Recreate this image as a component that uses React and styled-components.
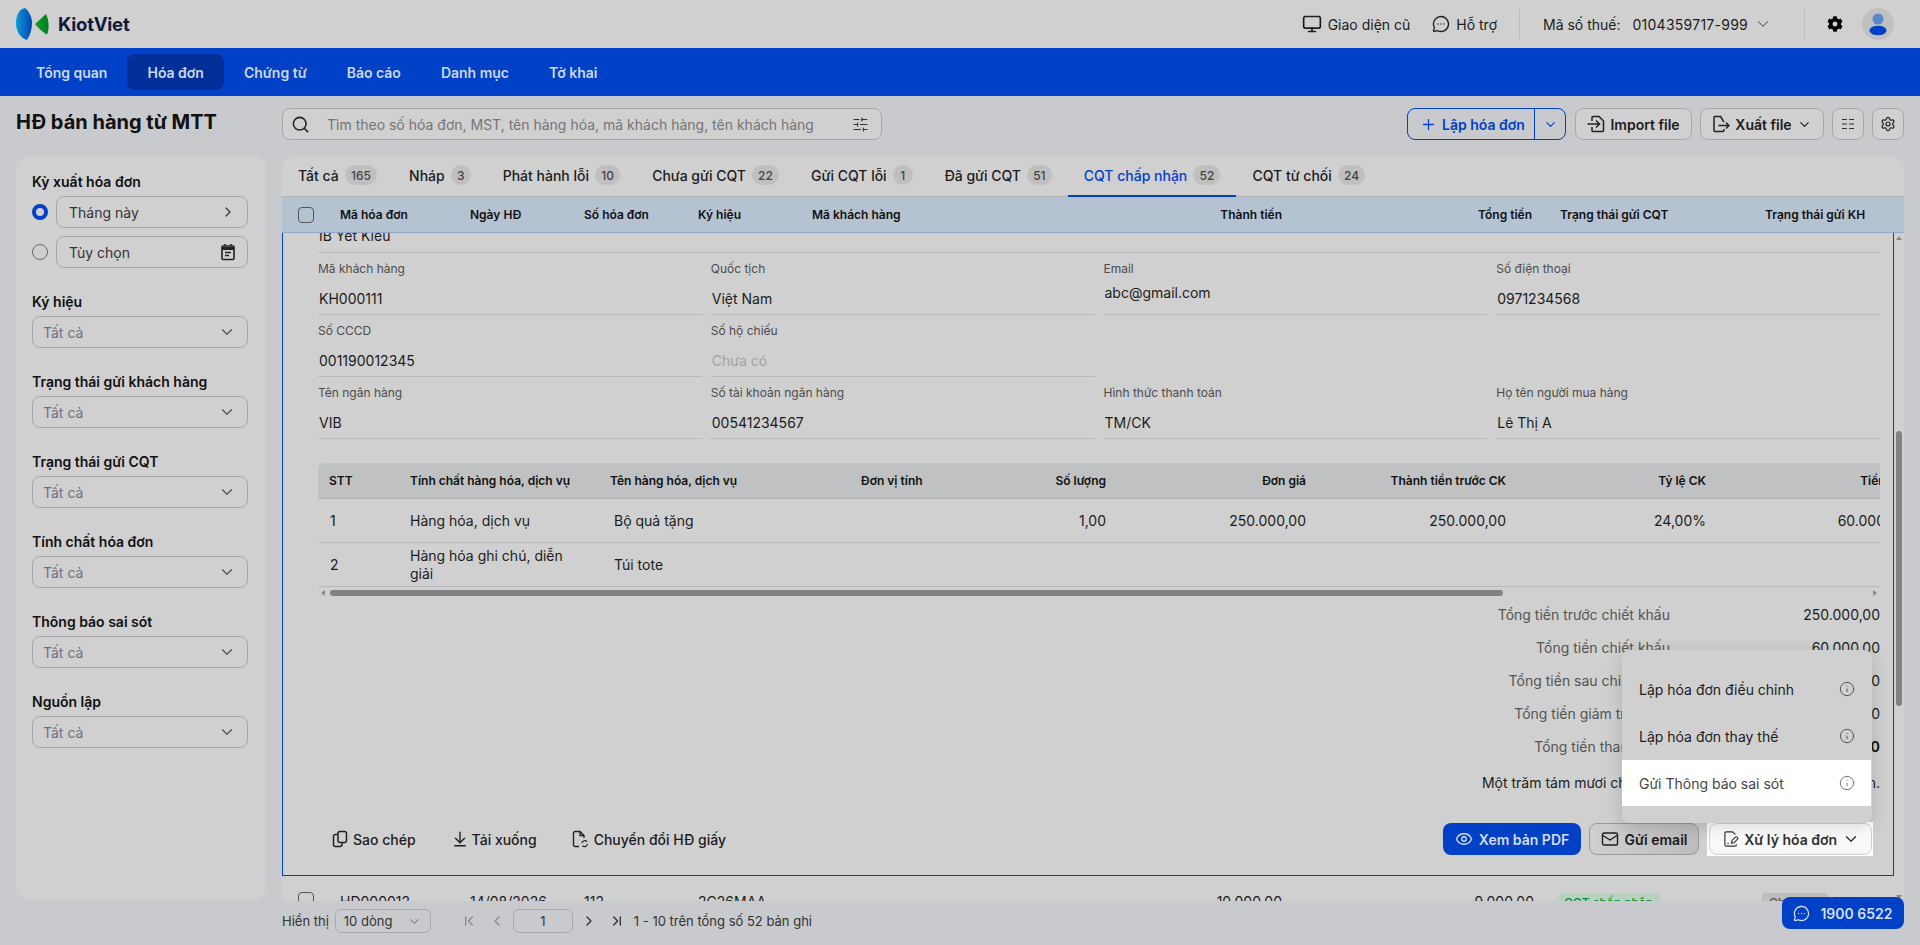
import React from 'react';
import styled, { createGlobalStyle } from 'styled-components';
import {
  ArrowDownToLine,
  ChevronDown,
  ChevronLeft,
  ChevronRight,
  ChevronFirst,
  ChevronLast,
  Eye,
  FilePenLine,
  Info,
  Mail,
  MessageCircleMore,
  Monitor,
  Plus,
  Search,
  Settings,
  SlidersHorizontal,
} from 'lucide-react';
import { FaCog } from 'react-icons/fa';

const BLUE = '#0041c7';
const PANEL = '#d0d0d0';
const LINE = '#b9b9b9';
const INK = '#1c1c1c';

const GlobalStyle = createGlobalStyle`
  * { box-sizing: border-box; }
  html, body { margin: 0; padding: 0; height: 100%; }
  body {
    font-family: Inter, "Noto Sans", "Liberation Sans", sans-serif;
    font-size: 14px;
    color: ${INK};
    background: #c8cacd;
  }
`;

const Page = styled.div`
  height: 100vh;
  display: flex;
  flex-direction: column;
  overflow: hidden;
  background: #c8cacd;
`;

const TopBar = styled.header`
  height: 48px;
  flex: none;
  display: flex;
  align-items: center;
  justify-content: space-between;
  padding: 0 26px 0 16px;
  background: ${PANEL};
`;

const Brand = styled.div`
  display: flex;
  align-items: center;
  gap: 9px;
  font-size: 18.5px;
  font-weight: 700;
  color: #0f1b3d;
  letter-spacing: -0.2px;
`;

const TopRight = styled.div`
  display: flex;
  align-items: center;
  height: 100%;
`;

const TopLink = styled.div`
  display: flex;
  align-items: center;
  gap: 6px;
  margin-right: ${(p) => p.$gap || 0}px;
`;

const Divider = styled.span`
  width: 1px;
  height: 30px;
  background: #bcbcbc;
  margin: 0 ${(p) => p.$right}px 0 ${(p) => p.$left}px;
`;

const TaxNumber = styled.span`
  margin-left: 12px;
  margin-right: 6px;
  letter-spacing: 0.25px;
`;

const Avatar = styled.div`
  width: 32px;
  height: 32px;
  border-radius: 50%;
  background: #c0c0c0;
  margin-left: 19px;
  display: flex;
  align-items: center;
  justify-content: center;
`;

const NavBar = styled.nav`
  height: 48px;
  flex: none;
  display: flex;
  align-items: center;
  padding: 0 16px;
  background: ${BLUE};
`;

const NavItem = styled.div`
  height: 36px;
  display: flex;
  align-items: center;
  padding: 0 20px;
  border-radius: 8px;
  font-weight: 600;
  color: #ccd6ec;
  background: ${(p) => (p.$active ? '#002f99' : 'transparent')};
`;

const Content = styled.main`
  flex: 1;
  min-height: 0;
  display: grid;
  grid-template-columns: 250px 1622px;
  grid-template-rows: 60px 1fr;
  column-gap: 16px;
  padding: 0 16px;
`;

const Title = styled.h1`
  margin: 0;
  font-size: 20px;
  font-weight: 700;
  color: #111;
  line-height: 52px;
`;

const ToolRow = styled.div`
  display: flex;
  align-items: flex-start;
  justify-content: space-between;
  padding-top: 12px;
`;

const SearchBox = styled.div`
  width: 600px;
  height: 32px;
  display: flex;
  align-items: center;
  padding: 0 12px 0 8px;
  border: 1px solid #a9a9a9;
  border-radius: 8px;
  background: ${PANEL};
`;

const Placeholder = styled.span`
  flex: 1;
  margin-left: 17px;
  color: #757575;
`;

const ToolGroup = styled.div`
  display: flex;
  gap: 8px;
`;

const OutlineButton = styled.button`
  height: 32px;
  display: flex;
  align-items: center;
  justify-content: center;
  gap: 5px;
  padding: 0 ${(p) => (p.$square ? 0 : 10)}px;
  width: ${(p) => (p.$w ? `${p.$w}px` : 'auto')};
  border: 1px solid #a9a9a9;
  border-radius: 8px;
  background: ${PANEL};
  color: ${INK};
  font: 600 14px Inter, sans-serif;
`;

const SplitButton = styled.div`
  width: 159px;
  height: 32px;
  display: flex;
  border: 1px solid ${BLUE};
  border-radius: 8px;
  color: ${BLUE};
  font-weight: 600;
  margin-right: 1px;
`;

const SplitMain = styled.div`
  flex: 1;
  display: flex;
  align-items: center;
  gap: 5px;
  padding-left: 12px;
  border-right: 1px solid ${BLUE};
`;

const SplitArrow = styled.div`
  width: 30px;
  display: flex;
  align-items: center;
  justify-content: center;
`;

const Sidebar = styled.aside`
  height: 744px;
  padding: 16px 18px 16px 16px;
  border-radius: 12px;
  background: ${PANEL};
  display: flex;
  flex-direction: column;
  gap: 24px;
`;

const FilterGroup = styled.section`
  display: flex;
  flex-direction: column;
  gap: 4px;
`;

const FilterLabel = styled.div`
  line-height: 20px;
  font-weight: 600;
  color: #111;
`;

const PeriodRows = styled.div`
  display: flex;
  flex-direction: column;
  gap: 8px;
`;

const PeriodRow = styled.div`
  display: flex;
  align-items: center;
  gap: 8px;
`;

const Radio = styled.span`
  width: 16px;
  height: 16px;
  flex: none;
  border-radius: 50%;
  background: ${PANEL};
  border: ${(p) => (p.$on ? `4.5px solid ${BLUE}` : '1px solid #666')};
`;

const SelectBox = styled.div`
  flex: 1 0 auto;
  height: 32px;
  display: flex;
  align-items: center;
  justify-content: space-between;
  padding: 0 11px 0 ${(p) => (p.$muted ? 10 : 12)}px;
  border: 1px solid #a9a9a9;
  border-radius: 8px;
  color: ${(p) => (p.$muted ? '#6b7280' : '#333')};
`;

const Main = styled.div`
  height: 789px;
  display: flex;
  flex-direction: column;
`;

const Card = styled.div`
  height: 745px;
  flex: none;
  display: flex;
  flex-direction: column;
  border-radius: 12px 12px 0 0;
  overflow: hidden;
  background: ${PANEL};
`;

const Tabs = styled.div`
  height: 41px;
  flex: none;
  display: flex;
  border-bottom: 1px solid #b4b4b4;
`;

const Tab = styled.div`
  height: 41px;
  display: flex;
  align-items: center;
  gap: 6px;
  padding: 0 16px 1px;
  font-weight: 500;
  color: ${(p) => (p.$active ? BLUE : INK)};
  border-bottom: 2px solid ${(p) => (p.$active ? BLUE : 'transparent')};
`;

const Badge = styled.span`
  height: 20px;
  min-width: 20px;
  padding: 0 6.2px;
  display: flex;
  align-items: center;
  justify-content: center;
  border-radius: 10px;
  background: #bfbfbf;
  font-size: 12px;
  font-weight: 500;
  color: #444;
`;

const COLUMNS = '58px 130px 114px 114px 114px 300px 180px 258px 205px 1fr';

const HeadRow = styled.div`
  height: 36px;
  flex: none;
  display: grid;
  grid-template-columns: ${COLUMNS};
  align-items: center;
  background: #b4c2d2;
  border-bottom: 1px solid #8fa8cc;
  font-size: 12px;
  font-weight: 600;
  color: #111;
`;

const Cell = styled.div`
  padding-left: ${(p) => (p.$status ? 10 : 0)}px;
  padding-right: ${(p) => p.$pr ?? 0}px;
  text-align: ${(p) => (p.$pr ? 'right' : 'left')};
  white-space: nowrap;
`;

const CheckCell = styled.div`
  padding-left: 16px;
`;

const Checkbox = styled.span`
  display: block;
  width: 16px;
  height: 16px;
  border: 1px solid #555;
  border-radius: 4px;
`;

const CardBody = styled.div`
  flex: 1;
  min-height: 0;
  display: flex;
`;

const ListColumn = styled.div`
  width: 1612px;
  flex: none;
  display: flex;
  flex-direction: column;
`;

const Detail = styled.div`
  height: 643px;
  flex: none;
  padding: 0 13px 0 35px;
  border: 1px solid ${BLUE};
  border-top: none;
  overflow: hidden;
`;

const ClippedBuyer = styled.div`
  display: flow-root;
  height: 20px;
  border-bottom: 1px solid ${LINE};
  line-height: 20px;
  padding-left: 1px;
`;

const BuyerText = styled.div`
  margin-top: -7px;
`;

const FieldGrid = styled.div`
  display: grid;
  grid-template-columns: repeat(4, 383.75px);
  grid-auto-rows: 62px;
  column-gap: 9px;
`;

const Field = styled.div`
  border-bottom: 1px solid ${LINE};
  padding-top: 8px;
`;

const FieldLabel = styled.div`
  font-size: 12px;
  line-height: 16px;
  color: #4c4c4c;
`;

const FieldValue = styled.div`
  margin-top: ${(p) => p.$top ?? 12}px;
  padding-left: 1px;
  line-height: 20px;
  color: ${(p) => (p.$empty ? '#a2a2a2' : INK)};
`;

const ItemsWrap = styled.div`
  margin-top: 24px;
  overflow: hidden;
`;

const ITEM_COLUMNS = '82px 200px 250px 150px 116px 200px 200px 200px 200px';

const ItemsHead = styled.div`
  height: 36px;
  width: 1598px;
  display: grid;
  grid-template-columns: ${ITEM_COLUMNS};
  align-items: center;
  background: #bfc1c3;
  border-bottom: 1px solid #b0b0b0;
  border-radius: 6px 6px 0 0;
  font-size: 12px;
  font-weight: 600;
  color: #111;
`;

const ItemsRow = styled.div`
  height: 43px;
  width: 1598px;
  padding-top: 1px;
  display: grid;
  grid-template-columns: ${ITEM_COLUMNS};
  align-items: center;
  line-height: 18px;
`;

const ItemRowFrame = styled.div`
  border-bottom: 1px solid ${LINE};
`;

const ItemCell = styled.div`
  padding-left: ${(p) => p.$left ?? 10}px;
  padding-right: ${(p) => p.$pr ?? 10}px;
  text-align: ${(p) => (p.$right ? 'right' : 'left')};
`;

const HScroll = styled.div`
  height: 11px;
  display: flex;
  align-items: center;
  gap: 5px;
  padding: 0 3px;
`;

const HThumb = styled.div`
  width: 1173px;
  height: 6px;
  border-radius: 3px;
  background: #808284;
`;

const ArrowLeft = styled.span`
  border: 3px solid transparent;
  border-right: 4px solid #8a8a8a;
  border-left: none;
`;

const ArrowRight = styled.span`
  margin-left: auto;
  border: 3px solid transparent;
  border-left: 4px solid #8a8a8a;
  border-right: none;
`;

const TotalRow = styled.div`
  height: 33px;
  display: grid;
  grid-template-columns: 1fr 210px;
  align-items: center;
  text-align: right;
  color: #555;
`;

const TotalValue = styled.span`
  color: ${INK};
  font-weight: ${(p) => (p.$bold ? 700 : 400)};
`;

const AmountWords = styled.div`
  height: 39px;
  line-height: 39px;
  text-align: right;
  white-space: nowrap;
  color: ${INK};
`;

const ActionBar = styled.div`
  margin-top: 20px;
  display: flex;
  justify-content: space-between;
  align-items: center;
  padding-right: 7px;
`;

const ActionGroup = styled.div`
  display: flex;
  align-items: center;
  gap: ${(p) => p.$gap}px;
`;

const GhostAction = styled.div`
  display: flex;
  align-items: center;
  gap: ${(p) => p.$gap ?? 5}px;
  padding: 0 14px;
  font-weight: 500;
  white-space: nowrap;
`;

const PrimaryAction = styled.div`
  width: 138px;
  height: 32px;
  display: flex;
  align-items: center;
  justify-content: center;
  gap: 6px;
  border-radius: 8px;
  background: ${BLUE};
  color: #d4dcee;
  font-weight: 600;
`;

const MailAction = styled.div`
  width: 110px;
  height: 32px;
  display: flex;
  align-items: center;
  justify-content: center;
  gap: 6px;
  border: 1px solid #9a9a9a;
  border-radius: 8px;
  background: linear-gradient(90deg, #cfcfcf, #bdbdbd);
  font-weight: 600;
`;

const MenuAnchor = styled.div`
  position: relative;
  padding: 1px 1px 1px 2px;
  background: #fff;
`;

const HandleButton = styled.div`
  width: 163px;
  height: 32px;
  display: flex;
  align-items: center;
  gap: 5px;
  padding: 0 11px 0 12px;
  border: 1px solid #d2d2d2;
  border-radius: 8px;
  background: linear-gradient(180deg, #fff, #f6f6f6);
  color: #333;
  font-weight: 600;
  white-space: nowrap;
`;

const HandleChevron = styled(ChevronDown)`
  margin-left: auto;
  flex: none;
`;

const Dropdown = styled.div`
  position: absolute;
  right: 1px;
  bottom: 33px;
  width: 250px;
  padding: 16px 1px 17px 0;
  border-radius: 8px;
  background: ${PANEL};
  box-shadow: 0 4px 18px rgba(0, 0, 0, 0.16);
  display: flex;
  flex-direction: column;
  gap: 1px;
`;

const DropItem = styled.div`
  height: 46px;
  display: flex;
  align-items: center;
  justify-content: space-between;
  padding: 0 16px 0 17px;
  background: ${(p) => (p.$spot ? '#fff' : 'transparent')};
  color: ${(p) => (p.$spot ? '#444' : INK)};
`;

const PeekRow = styled.div`
  height: 25px;
  flex: none;
  display: grid;
  grid-template-columns: ${COLUMNS};
  padding-top: 16px;
  line-height: 20px;
  overflow: hidden;
`;

const StatusTag = styled.span`
  display: inline-block;
  height: 22px;
  line-height: 20px;
  margin-left: -3px;
  padding: 0 7px;
  border-radius: 4px;
  font-size: 12px;
  font-weight: 500;
  color: ${(p) => (p.$ok ? '#0b8a3c' : '#555')};
  background: ${(p) => (p.$ok ? '#b7d3c0' : '#bdbdbd')};
`;

const ScrollTrack = styled.div`
  flex: 1;
  display: flex;
  flex-direction: column;
  align-items: center;
  padding: 3px 0 2px;
`;

const ArrowUp = styled.span`
  border: 3px solid transparent;
  border-bottom: 4px solid #8a8a8a;
  border-top: none;
`;

const ArrowDown = styled.span`
  margin-top: auto;
  border: 3px solid transparent;
  border-top: 4px solid #8a8a8a;
  border-bottom: none;
`;

const VThumb = styled.div`
  width: 6px;
  height: 275px;
  margin-top: 191px;
  border-radius: 3px;
  background: #808284;
`;

const Pager = styled.footer`
  flex: 1;
  display: flex;
  align-items: flex-start;
  padding-top: 8px;
  font-size: 13px;
  color: #333;
`;

const PagerLabel = styled.span`
  line-height: 24px;
`;

const PageSize = styled.div`
  width: 96px;
  height: 24px;
  margin-left: 6px;
  display: flex;
  align-items: center;
  justify-content: space-between;
  padding: 0 8px;
  border: 1px solid #a9a9a9;
  border-radius: 6px;
`;

const PagerNav = styled.div`
  height: 24px;
  margin: 0 9px 0 30px;
  display: flex;
  align-items: center;
  gap: 8px;
`;

const PagerPair = styled.div`
  display: flex;
  align-items: center;
  gap: 12px;
`;

const PageInput = styled.div`
  width: 60px;
  height: 24px;
  display: flex;
  align-items: center;
  justify-content: center;
  border: 1px solid #a9a9a9;
  border-radius: 6px;
`;

const CallButton = styled.div`
  position: fixed;
  right: 16px;
  top: 897px;
  width: 122px;
  height: 32px;
  display: flex;
  align-items: center;
  justify-content: center;
  gap: 10px;
  border-radius: 8px;
  background: ${BLUE};
  color: #d4dcee;
  font-weight: 600;
`;

const Logo = () => (
  <svg width="33" height="32" viewBox="0 0 33 32">
    <defs>
      <linearGradient id="lens" x1="0" x2="1" y1="0" y2="0">
        <stop offset="0" stopColor="#0a9ad8" />
        <stop offset="1" stopColor="#0046b8" />
      </linearGradient>
      <linearGradient id="leaf" x1="0" x2="1" y1="0" y2="0">
        <stop offset="0" stopColor="#0ba62a" />
        <stop offset="1" stopColor="#067a20" />
      </linearGradient>
    </defs>
    <path d="M9 0C3 1 0 8 0 15C0 23 4 30 11 32C14 27 16 22 16 15C16 9 13 3 9 0Z" fill="url(#lens)" />
    <path d="M19 16L30 6C33 12 33.5 21 31 26.5C27 24.5 22 20 19 16Z" fill="url(#leaf)" />
  </svg>
);

const AvatarIcon = () => (
  <svg width="20" height="24" viewBox="0 0 20 24">
    <circle cx="10" cy="7" r="5.5" fill="#5b87c8" />
    <ellipse cx="10" cy="18.5" rx="8.5" ry="4.8" fill="#0041c7" />
  </svg>
);

const CalendarIcon = () => (
  <svg width="16" height="18" viewBox="0 0 16 18" fill="none" stroke="#222">
    <rect x="2" y="3" width="12" height="13.5" rx="1" strokeWidth="1.6" />
    <path d="M2 5.5H14" strokeWidth="3" />
    <path d="M5 1V3M11 1V3" strokeWidth="1.6" />
    <path d="M5 9.5H11M5 12.5H9" strokeWidth="1.3" />
  </svg>
);

const ColumnsIcon = () => (
  <svg width="16" height="16" viewBox="0 0 16 16" stroke="#333" strokeWidth="1.2">
    <path d="M2 3.5H7M9 3.5H14M2 8H7M9 8H14M2 12.5H7M9 12.5H14" />
  </svg>
);

const ImportIcon = () => (
  <svg width="18" height="18" viewBox="0 0 18 18" fill="none" stroke="#222" strokeWidth="1.5">
    <path d="M5 6V2.5A1 1 0 0 1 6 1.5H12L16.5 6V15.5A1 1 0 0 1 15.5 16.5H6A1 1 0 0 1 5 15.5V12" />
    <path d="M0.5 9H12M9 5.5L12.5 9L9 12.5" />
  </svg>
);

const ExportIcon = () => (
  <svg width="18" height="18" viewBox="0 0 18 18" fill="none" stroke="#222" strokeWidth="1.5">
    <path d="M12 7L8.5 1.5H3A1 1 0 0 0 2 2.5V15.5A1 1 0 0 0 3 16.5H11A1 1 0 0 0 12 15.5V14" />
    <path d="M6.5 10.5H17M14 7.5L17 10.5L14 13.5" />
  </svg>
);

const CopyIcon = () => (
  <svg width="16" height="18" viewBox="0 0 16 18" fill="none" stroke="#222" strokeWidth="1.5">
    <rect x="6" y="1.5" width="8.5" height="11" rx="2" />
    <path d="M6 4.5H3.5A2 2 0 0 0 1.5 6.5V14.5A2 2 0 0 0 3.5 16.5H8A2 2 0 0 0 10 14.5V12.5" />
  </svg>
);

const ConvertIcon = () => (
  <svg width="17" height="18" viewBox="0 0 17 18" fill="none" stroke="#222" strokeWidth="1.4">
    <path d="M7 16.5H3A1.5 1.5 0 0 1 1.5 15V3A1.5 1.5 0 0 1 3 1.5H8L12 5.5V8" />
    <path d="M8 1.5V5.5H12" />
    <path d="M10 13A3 3 0 0 1 15 11.5M15.5 14A3 3 0 0 1 10.5 15.8" strokeWidth="1.2" />
  </svg>
);

const tabs = [
  ['Tất cả', 165],
  ['Nháp', 3],
  ['Phát hành lỗi', 10],
  ['Chưa gửi CQT', 22],
  ['Gửi CQT lỗi', 1],
  ['Đã gửi CQT', 51],
  ['CQT chấp nhận', 52, true],
  ['CQT từ chối', 24],
];

const filters = [
  'Ký hiệu',
  'Trạng thái gửi khách hàng',
  'Trạng thái gửi CQT',
  'Tính chất hóa đơn',
  'Thông báo sai sót',
  'Nguồn lập',
];

const fields = [
  { label: 'Mã khách hàng', value: 'KH000111' },
  { label: 'Quốc tịch', value: 'Việt Nam' },
  { label: 'Email', value: 'abc@gmail.com', top: 6 },
  { label: 'Số điện thoại', value: '0971234568' },
  { label: 'Số CCCD', value: '001190012345' },
  { label: 'Số hộ chiếu', value: 'Chưa có', empty: true },
  null,
  null,
  { label: 'Tên ngân hàng', value: 'VIB' },
  { label: 'Số tài khoản ngân hàng', value: '00541234567' },
  { label: 'Hình thức thanh toán', value: 'TM/CK' },
  { label: 'Họ tên người mua hàng', value: 'Lê Thị A' },
];

const totals = [
  ['Tổng tiền trước chiết khấu', '250.000,00'],
  ['Tổng tiền chiết khấu', '60.000,00'],
  ['Tổng tiền sau chiết khấu', '190.000,00'],
  ['Tổng tiền giảm trừ khác', '470,00'],
  ['Tổng tiền thanh toán', '189.530,00', true],
];

const App = () => (
  <Page>
    <GlobalStyle />
    <TopBar>
      <Brand>
        <Logo />
        KiotViet
      </Brand>
      <TopRight>
        <TopLink $gap={22}>
          <Monitor size={20} strokeWidth={2} />
          Giao diện cũ
        </TopLink>
        <TopLink>
          <MessageCircleMore size={18} strokeWidth={1.8} />
          Hỗ trợ
        </TopLink>
        <Divider $left={22} $right={23} />
        Mã số thuế:
        <TaxNumber>0104359717-999</TaxNumber>
        <ChevronDown size={18} strokeWidth={1.4} color="#555" />
        <Divider $left={32} $right={22} />
        <FaCog size={16} color="#000" />
        <Avatar>
          <AvatarIcon />
        </Avatar>
      </TopRight>
    </TopBar>

    <NavBar>
      <NavItem>Tổng quan</NavItem>
      <NavItem $active>Hóa đơn</NavItem>
      <NavItem>Chứng từ</NavItem>
      <NavItem>Báo cáo</NavItem>
      <NavItem>Danh mục</NavItem>
      <NavItem>Tờ khai</NavItem>
    </NavBar>

    <Content>
      <Title>HĐ bán hàng từ MTT</Title>
      <ToolRow>
        <SearchBox>
          <Search size={19} strokeWidth={2} color="#222" />
          <Placeholder>Tìm theo số hóa đơn, MST, tên hàng hóa, mã khách hàng, tên khách hàng</Placeholder>
          <SlidersHorizontal size={17} strokeWidth={1.6} color="#333" />
        </SearchBox>
        <ToolGroup>
          <SplitButton>
            <SplitMain>
              <Plus size={17} strokeWidth={1.8} />
              Lập hóa đơn
            </SplitMain>
            <SplitArrow>
              <ChevronDown size={15} strokeWidth={1.8} />
            </SplitArrow>
          </SplitButton>
          <OutlineButton $w={117}>
            <ImportIcon />
            Import file
          </OutlineButton>
          <OutlineButton $w={124}>
            <ExportIcon />
            Xuất file
            <ChevronDown size={15} strokeWidth={1.8} />
          </OutlineButton>
          <OutlineButton $square $w={32}>
            <ColumnsIcon />
          </OutlineButton>
          <OutlineButton $square $w={32}>
            <Settings size={16} strokeWidth={1.8} />
          </OutlineButton>
        </ToolGroup>
      </ToolRow>

      <Sidebar>
        <FilterGroup>
          <FilterLabel>Kỳ xuất hóa đơn</FilterLabel>
          <PeriodRows>
            <PeriodRow>
              <Radio $on />
              <SelectBox>
                Tháng này
                <ChevronRight size={16} strokeWidth={1.8} />
              </SelectBox>
            </PeriodRow>
            <PeriodRow>
              <Radio />
              <SelectBox>
                Tùy chọn
                <CalendarIcon />
              </SelectBox>
            </PeriodRow>
          </PeriodRows>
        </FilterGroup>
        {filters.map((name) => (
          <FilterGroup key={name}>
            <FilterLabel>{name}</FilterLabel>
            <SelectBox $muted>
              Tất cả
              <ChevronDown size={18} strokeWidth={1.6} color="#555" />
            </SelectBox>
          </FilterGroup>
        ))}
      </Sidebar>

      <Main>
        <Card>
          <Tabs>
            {tabs.map(([name, count, active]) => (
              <Tab key={name} $active={active}>
                {name}
                <Badge>{count}</Badge>
              </Tab>
            ))}
          </Tabs>
          <HeadRow>
            <CheckCell>
              <Checkbox />
            </CheckCell>
            <Cell>Mã hóa đơn</Cell>
            <Cell>Ngày HĐ</Cell>
            <Cell>Số hóa đơn</Cell>
            <Cell>Ký hiệu</Cell>
            <Cell>Mã khách hàng</Cell>
            <Cell $pr={10}>Thành tiền</Cell>
            <Cell $pr={18}>Tổng tiền</Cell>
            <Cell $status>Trạng thái gửi CQT</Cell>
            <Cell $status>Trạng thái gửi KH</Cell>
          </HeadRow>
          <CardBody>
            <ListColumn>
              <Detail>
                <ClippedBuyer>
                  <BuyerText>IB Yết Kiêu</BuyerText>
                </ClippedBuyer>
                <FieldGrid>
                  {fields.map((f, i) =>
                    f ? (
                      <Field key={f.label}>
                        <FieldLabel>{f.label}</FieldLabel>
                        <FieldValue $top={f.top} $empty={f.empty}>
                          {f.value}
                        </FieldValue>
                      </Field>
                    ) : (
                      <div key={i} />
                    )
                  )}
                </FieldGrid>
                <ItemsWrap>
                  <ItemsHead>
                    <ItemCell $left={11}>STT</ItemCell>
                    <ItemCell>Tính chất hàng hóa, dịch vụ</ItemCell>
                    <ItemCell>Tên hàng hóa, dịch vụ</ItemCell>
                    <ItemCell $left={11}>Đơn vị tính</ItemCell>
                    <ItemCell $right>Số lượng</ItemCell>
                    <ItemCell $right>Đơn giá</ItemCell>
                    <ItemCell $right>Thành tiền trước CK</ItemCell>
                    <ItemCell $right>Tỷ lệ CK</ItemCell>
                    <ItemCell $right>Tiền CK</ItemCell>
                  </ItemsHead>
                  <ItemRowFrame>
                    <ItemsRow>
                      <ItemCell $left={12}>1</ItemCell>
                      <ItemCell>Hàng hóa, dịch vụ</ItemCell>
                      <ItemCell $left={14}>Bộ quả tặng</ItemCell>
                      <ItemCell />
                      <ItemCell $right>1,00</ItemCell>
                      <ItemCell $right>250.000,00</ItemCell>
                      <ItemCell $right>250.000,00</ItemCell>
                      <ItemCell $right>24,00%</ItemCell>
                      <ItemCell $right>60.000,00</ItemCell>
                    </ItemsRow>
                  </ItemRowFrame>
                  <ItemRowFrame>
                    <ItemsRow>
                      <ItemCell $left={12}>2</ItemCell>
                      <ItemCell $pr={30}>Hàng hóa ghi chú, diễn giải</ItemCell>
                      <ItemCell $left={14}>Túi tote</ItemCell>
                    </ItemsRow>
                  </ItemRowFrame>
                </ItemsWrap>
                <HScroll>
                  <ArrowLeft />
                  <HThumb />
                  <ArrowRight />
                </HScroll>
                {totals.map(([label, value, bold]) => (
                  <TotalRow key={label}>
                    {label}
                    <TotalValue $bold={bold}>{value}</TotalValue>
                  </TotalRow>
                ))}
                <AmountWords>Một trăm tám mươi chín nghìn năm trăm ba mươi đồng chẵn.</AmountWords>
                <ActionBar>
                  <ActionGroup $gap={7}>
                    <GhostAction>
                      <CopyIcon />
                      Sao chép
                    </GhostAction>
                    <GhostAction $gap={3}>
                      <ArrowDownToLine size={18} strokeWidth={1.8} />
                      Tải xuống
                    </GhostAction>
                    <GhostAction>
                      <ConvertIcon />
                      Chuyển đổi HĐ giấy
                    </GhostAction>
                  </ActionGroup>
                  <ActionGroup $gap={8}>
                    <PrimaryAction>
                      <Eye size={18} strokeWidth={1.8} />
                      Xem bản PDF
                    </PrimaryAction>
                    <MailAction>
                      <Mail size={18} strokeWidth={1.8} />
                      Gửi email
                    </MailAction>
                    <MenuAnchor>
                      <HandleButton>
                        <FilePenLine size={18} strokeWidth={1.6} />
                        Xử lý hóa đơn
                        <HandleChevron size={18} strokeWidth={1.8} />
                      </HandleButton>
                      <Dropdown>
                        <DropItem>
                          Lập hóa đơn điều chỉnh
                          <Info size={16} strokeWidth={1.5} color="#555" />
                        </DropItem>
                        <DropItem>
                          Lập hóa đơn thay thế
                          <Info size={16} strokeWidth={1.5} color="#555" />
                        </DropItem>
                        <DropItem $spot>
                          Gửi Thông báo sai sót
                          <Info size={16} strokeWidth={1.5} color="#777" />
                        </DropItem>
                      </Dropdown>
                    </MenuAnchor>
                  </ActionGroup>
                </ActionBar>
              </Detail>
              <PeekRow>
                <CheckCell>
                  <Checkbox />
                </CheckCell>
                <Cell>HD000012</Cell>
                <Cell>14/08/2026</Cell>
                <Cell>112</Cell>
                <Cell>2C26MAA</Cell>
                <Cell />
                <Cell $pr={10}>10.000,00</Cell>
                <Cell $pr={16}>9.000,00</Cell>
                <Cell $status>
                  <StatusTag $ok>CQT chấp nhận</StatusTag>
                </Cell>
                <Cell $status>
                  <StatusTag>Chưa gửi</StatusTag>
                </Cell>
              </PeekRow>
            </ListColumn>
            <ScrollTrack>
              <ArrowUp />
              <VThumb />
              <ArrowDown />
            </ScrollTrack>
          </CardBody>
        </Card>
        <Pager>
          <PagerLabel>Hiển thị</PagerLabel>
          <PageSize>
            10 dòng
            <ChevronDown size={15} strokeWidth={1.4} color="#555" />
          </PageSize>
          <PagerNav>
            <PagerPair>
              <ChevronFirst size={16} strokeWidth={2} color="#888" />
              <ChevronLeft size={16} strokeWidth={2} color="#888" />
            </PagerPair>
            <PageInput>1</PageInput>
            <PagerPair>
              <ChevronRight size={16} strokeWidth={2} color="#333" />
              <ChevronLast size={16} strokeWidth={2} color="#333" />
            </PagerPair>
          </PagerNav>
          <PagerLabel>1 - 10 trên tổng số 52 bản ghi</PagerLabel>
        </Pager>
      </Main>
    </Content>

    <CallButton>
      <MessageCircleMore size={17} strokeWidth={1.8} />
      1900 6522
    </CallButton>
  </Page>
);

export default App;
